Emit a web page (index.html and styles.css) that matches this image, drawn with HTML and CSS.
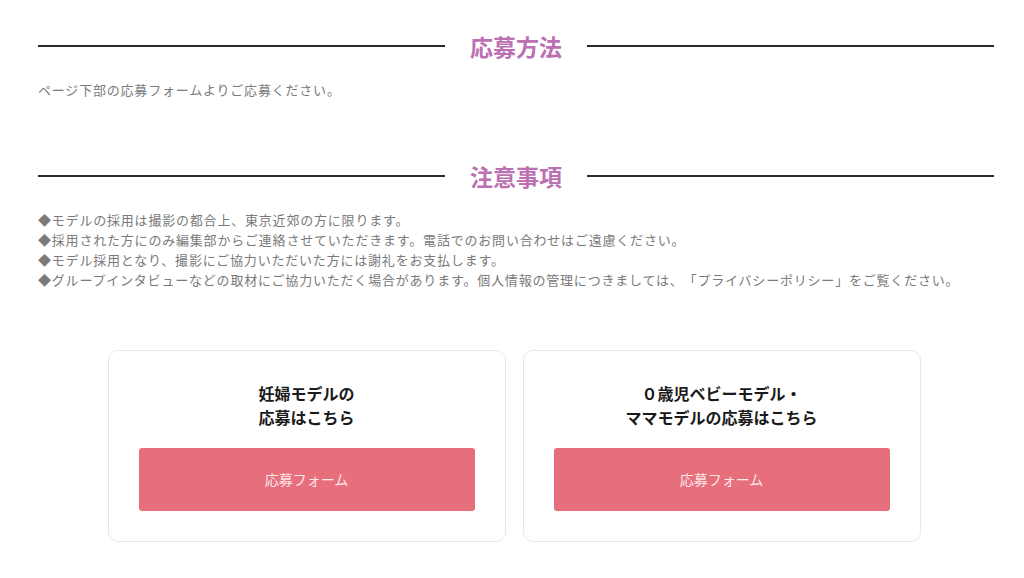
FILE: index.html
```html
<!DOCTYPE html>
<html lang="ja">
<head>
  <meta charset="utf-8" />
  <title>応募方法</title>
  <link rel="stylesheet" href="styles.css">
</head>
<body>
  <div class="container">
    <!-- 応募方法 -->
    <section class="section">
      <h2 class="section-title"><span>応募方法</span></h2>
      <p class="text">ページ下部の応募フォームよりご応募ください。</p>
    </section>

    <!-- 注意事項 -->
    <section class="section">
      <h2 class="section-title"><span>注意事項</span></h2>
      <ul class="notes">
        <li>◆モデルの採用は撮影の都合上、東京近郊の方に限ります。</li>
        <li>◆採用された方にのみ編集部からご連絡させていただきます。電話でのお問い合わせはご遠慮ください。</li>
        <li>◆モデル採用となり、撮影にご協力いただいた方には謝礼をお支払します。</li>
        <li>◆グループインタビューなどの取材にご協力いただく場合があります。個人情報の管理につきましては、「プライバシーポリシー」をご覧ください。</li>
      </ul>
    </section>

    <!-- 応募フォーム -->
    <div class="entry-cards">
      <div class="entry-card">
        <p class="entry-title">妊婦モデルの<br>応募はこちら</p>
        <a href="#" class="entry-btn">応募フォーム</a>
      </div>
      <div class="entry-card">
        <p class="entry-title">０歳児ベビーモデル・<br>ママモデルの応募はこちら</p>
        <a href="#" class="entry-btn">応募フォーム</a>
      </div>
    </div>
  </div>
</body>
</html>
```

FILE: styles.css
```css
* {
  margin: 0;
  padding: 0;
  box-sizing: border-box;
}

body {
  font-family: "Noto Sans CJK JP", "Noto Sans", sans-serif;
  background: #fff;
  color: #333;
  text-spacing-trim: space-all;
}

.container {
  padding: 30px 30px 0 38px;
}

.section {
  margin-bottom: 60px;
}

.section-title {
  display: flex;
  align-items: center;
  gap: 25px;
  font-size: 23px;
  font-weight: 700;
  color: #bb70b3;
  line-height: 32px;
  margin-bottom: 28px;
}

.section-title::before,
.section-title::after {
  content: "";
  flex: 1;
  height: 2px;
  background: #2b2b2b;
}

.text,
.notes li {
  font-size: 13px;
  line-height: 20px;
  letter-spacing: 0.8px;
  color: #7a7a7a;
}

.text {
  margin-top: -10px;
}

.notes {
  list-style: none;
  margin-top: -10px;
}

.entry-cards {
  display: flex;
  justify-content: center;
  gap: 17px;
  padding-right: 4px;
  margin-top: 2px;
}

.entry-card {
  width: 398px;
  border: 1px solid #e8e8e8;
  border-radius: 10px;
  padding: 30px;
  text-align: center;
}

.entry-title {
  font-size: 16px;
  font-weight: 700;
  line-height: 24px;
  color: #1a1a1a;
  margin-bottom: 19px;
}

.entry-btn {
  display: block;
  height: 63px;
  line-height: 63px;
  background: #e76e7b;
  color: #fde8ea;
  text-decoration: none;
  font-size: 14px;
  border-radius: 3px;
}
```
